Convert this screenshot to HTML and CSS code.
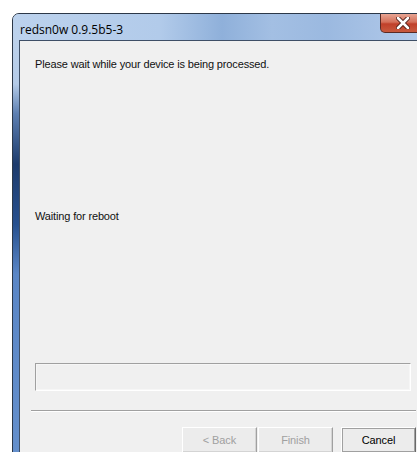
FILE: index.html
```html
<!DOCTYPE html>
<html lang="en">
<head>
  <meta charset="UTF-8" />
  <title>redsn0w 0.9.5b5-3</title>
  <link rel="stylesheet" href="styles.css">
</head>
<body>
  <div class="window">
    <div class="titlebar">
      <span class="title">redsn0w 0.9.5b5-3</span>
      <div class="close">
        <svg width="14" height="12" viewBox="0 0 14 12">
          <path d="M2 1 L12 11 M12 1 L2 11" stroke="#4a1a14" stroke-width="4.4" stroke-linecap="round"/>
          <path d="M2 1 L12 11 M12 1 L2 11" stroke="#ffffff" stroke-width="2.6" stroke-linecap="round"/>
        </svg>
      </div>
    </div>

    <div class="client">
      <p class="msg">Please wait while your device is being processed.</p>
      <p class="status">Waiting for reboot</p>
      <div class="progress"></div>
      <div class="separator"></div>
      <div class="buttons">
        <button class="btn disabled">&lt; Back</button>
        <button class="btn disabled">Finish</button>
        <button class="btn cancel">Cancel</button>
      </div>
    </div>
  </div>
</body>
</html>
```

FILE: styles.css
```css
body {
  margin: 0;
  background: #ffffff;
  overflow: hidden;
  font-family: "Liberation Sans", Arial, sans-serif;
}

/* Окно с рамкой Aero */
.window {
  margin: 13px 0 0 12px;
  width: 418px;
  height: 460px;
  border: 1px solid #2c3848;
  border-radius: 7px 7px 0 0;
  background:
    linear-gradient(to bottom, #c2d5ec 0px, #b4cbe8 70px, #5d7fb1 100px, #1d3b6c 150px, #27508e 210px, #5a86c6 260px, #6590cc 460px);
  display: flex;
  flex-direction: column;
}

.titlebar {
  height: 26px;
  display: flex;
  align-items: flex-start;
  background: linear-gradient(to right, #bcd2ed 0%, #b2cbea 35%, #8fb0da 50%, #a3bfe3 62%, #9bb9e0 75%, #b5cceb 100%);
  border-radius: 6px 6px 0 0;
}

.title {
  padding: 7px 0 0 7px;
  font-family: "Open Sans", "Noto Sans", sans-serif;
  font-size: 12px;
  color: #000;
}

.close {
  margin-left: auto;
  margin-right: 6px;
  width: 43px;
  height: 18px;
  border: 1px solid #5a2a24;
  border-top: none;
  border-radius: 0 0 5px 5px;
  background: linear-gradient(to bottom, #e8a593 0%, #d4705a 45%, #c0402a 55%, #c85a3e 100%);
  display: flex;
  align-items: center;
  justify-content: center;
}

/* Рабочая область мастера */
.client {
  margin-left: 6px;
  flex: 1;
  border: 1px solid #3e4f66;
  border-right: none;
  background: #f0f0f0;
  font-size: 11px;
  letter-spacing: -0.15px;
  color: #111;
}

.msg {
  margin: 17px 0 0 15px;
  line-height: 13px;
}

.status {
  margin: 139px 0 0 15px;
  line-height: 13px;
}

.progress {
  margin: 140px 0 0 15px;
  width: 374px;
  height: 26px;
  border: 1px solid;
  border-color: #a0a0a0 #ffffff #ffffff #a0a0a0;
  box-shadow: inset 0 0 0 1px #f6f6f6;
}

.separator {
  margin: 19px 0 0 11px;
  width: 385px;
  height: 1px;
  background: #a0a0a0;
  border-bottom: 1px solid #ffffff;
}

/* Кнопки внизу */
.buttons {
  display: flex;
  margin: 15px 0 0 162px;
}

.btn {
  width: 75px;
  height: 26px;
  margin: 0;
  padding: 0;
  font-family: inherit;
  font-size: 11px;
  letter-spacing: -0.1px;
  background: #ececec;
  border: 1px solid;
  border-color: #ffffff #696969 #696969 #ffffff;
  box-shadow: 1px 1px 0 #a0a0a0 inset, -1px -1px 0 #a0a0a0 inset;
}

.btn + .btn {
  margin-left: 1px;
}

.disabled {
  color: #a0a0a0;
  border-color: #ffffff #a0a0a0 #a0a0a0 #ffffff;
  box-shadow: -1px -1px 0 #d4d4d4 inset;
}

.cancel {
  margin-left: 8px !important;
  color: #000;
}
```
